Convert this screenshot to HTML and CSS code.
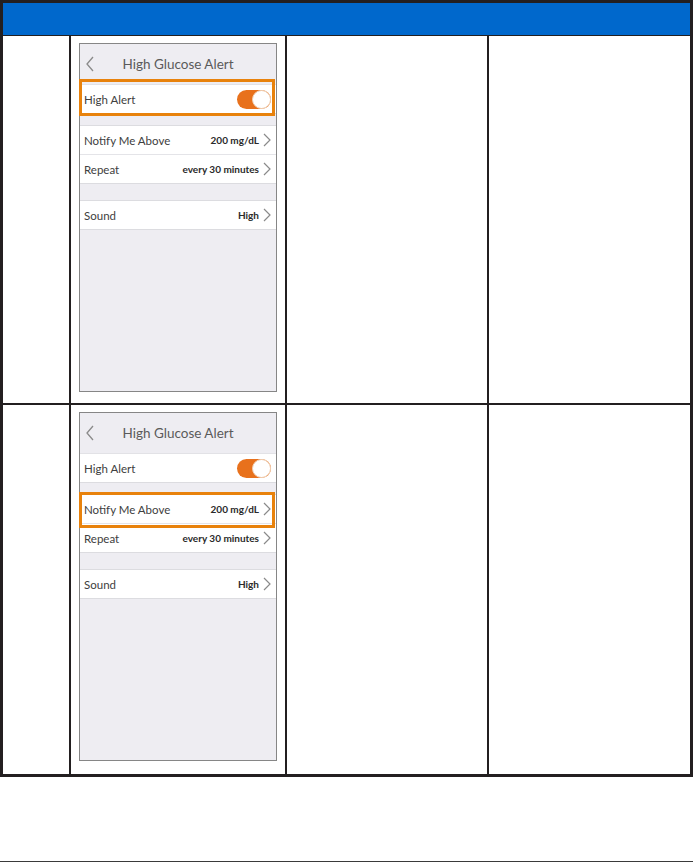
FILE: index.html
```html
<!DOCTYPE html>
<html lang="en">

<head>
  <meta charset="UTF-8" />
  <meta name="viewport" content="width=device-width, initial-scale=1.0" />
  <title>High Glucose Alert</title>
  <link rel="stylesheet" href="styles.css">
</head>

<body>
  <div class="page">
    <div class="steps-table">
      <div class="table-head"></div>

      <!-- Step 1 -->
      <div class="step-row first">
        <div class="cell"></div>
        <div class="cell shot-cell">
          <div class="phone">
            <div class="phone-title">
              <svg class="back" width="10" height="16" viewBox="0 0 10 16"><path d="M8 1 L2 8 L8 15" fill="none" stroke="#8a8a8a" stroke-width="1.3"/></svg>
              High Glucose Alert
            </div>
            <div class="group">
              <div class="item">
                <span class="label">High Alert</span>
                <span class="toggle"><span class="knob"></span></span>
              </div>
            </div>
            <div class="group gap-sm">
              <div class="item">
                <span class="label">Notify Me Above</span>
                <span class="value">200 mg/dL</span>
                <svg class="chev" width="8" height="14" viewBox="0 0 8 14"><path d="M1 1 L7 7 L1 13" fill="none" stroke="#8a8a8a" stroke-width="1.2"/></svg>
              </div>
              <div class="item">
                <span class="label">Repeat</span>
                <span class="value">every 30 minutes</span>
                <svg class="chev" width="8" height="14" viewBox="0 0 8 14"><path d="M1 1 L7 7 L1 13" fill="none" stroke="#8a8a8a" stroke-width="1.2"/></svg>
              </div>
            </div>
            <div class="group gap-lg">
              <div class="item">
                <span class="label">Sound</span>
                <span class="value">High</span>
                <svg class="chev" width="8" height="14" viewBox="0 0 8 14"><path d="M1 1 L7 7 L1 13" fill="none" stroke="#8a8a8a" stroke-width="1.2"/></svg>
              </div>
            </div>
            <div class="highlight hl-alert"></div>
          </div>
        </div>
        <div class="cell"></div>
        <div class="cell"></div>
      </div>

      <!-- Step 2 -->
      <div class="step-row second">
        <div class="cell"></div>
        <div class="cell shot-cell">
          <div class="phone">
            <div class="phone-title">
              <svg class="back" width="10" height="16" viewBox="0 0 10 16"><path d="M8 1 L2 8 L8 15" fill="none" stroke="#8a8a8a" stroke-width="1.3"/></svg>
              High Glucose Alert
            </div>
            <div class="group">
              <div class="item">
                <span class="label">High Alert</span>
                <span class="toggle"><span class="knob"></span></span>
              </div>
            </div>
            <div class="group gap-sm">
              <div class="item">
                <span class="label">Notify Me Above</span>
                <span class="value">200 mg/dL</span>
                <svg class="chev" width="8" height="14" viewBox="0 0 8 14"><path d="M1 1 L7 7 L1 13" fill="none" stroke="#8a8a8a" stroke-width="1.2"/></svg>
              </div>
              <div class="item">
                <span class="label">Repeat</span>
                <span class="value">every 30 minutes</span>
                <svg class="chev" width="8" height="14" viewBox="0 0 8 14"><path d="M1 1 L7 7 L1 13" fill="none" stroke="#8a8a8a" stroke-width="1.2"/></svg>
              </div>
            </div>
            <div class="group gap-lg">
              <div class="item">
                <span class="label">Sound</span>
                <span class="value">High</span>
                <svg class="chev" width="8" height="14" viewBox="0 0 8 14"><path d="M1 1 L7 7 L1 13" fill="none" stroke="#8a8a8a" stroke-width="1.2"/></svg>
              </div>
            </div>
            <div class="highlight hl-notify"></div>
          </div>
        </div>
        <div class="cell"></div>
        <div class="cell"></div>
      </div>
    </div>

    <div class="footer-line"></div>
  </div>
</body>

</html>
```

FILE: styles.css
```css
/* Page */
body {
  margin: 0;
  background: #fff;
  font-family: 'Lato', 'Open Sans', sans-serif;
}

.page {
  width: 693px;
}

/* Table */
.steps-table {
  border: 3px solid #231f20;
  background: #231f20;
  display: flex;
  flex-direction: column;
  gap: 2px;
}

.table-head {
  height: 32px;
  background: #0068cc;
  margin-bottom: -1px;
}

.step-row {
  display: grid;
  grid-template-columns: 66px 214px 200px 1fr;
  gap: 2px;
}

.step-row.first {
  height: 367px;
}

.step-row.second {
  height: 369px;
}

.cell {
  background: #fff;
}

.shot-cell {
  padding: 7px 8px 0;
}

/* Phone screen */
.phone {
  position: relative;
  height: 347px;
  background: #eeedf2;
  border: 1px solid #868686;
  color: #3b3b3b;
}

.phone-title {
  height: 40px;
  display: flex;
  align-items: center;
  justify-content: center;
  position: relative;
  font-size: 13.5px;
  color: #5a5a5a;
  border-bottom: 1px solid #e2e2e6;
}

.back {
  position: absolute;
  left: 5px;
  top: 12px;
}

.group {
  background: #fff;
  border-bottom: 1px solid #dcdce0;
}

.gap-sm {
  margin-top: 11px;
  border-top: 1px solid #dcdce0;
}

.gap-lg {
  margin-top: 16px;
  border-top: 1px solid #dcdce0;
}

.item {
  height: 28px;
  display: flex;
  align-items: center;
  padding: 0 5px 0 4px;
  font-size: 11.5px;
}

.item + .item {
  border-top: 1px solid #e4e4e8;
}

.label {
  flex: 1;
  color: #404040;
}

.value {
  font-size: 10px;
  font-weight: 700;
  color: #2a2a2a;
  margin-right: 4px;
}

.chev {
  display: block;
}

/* Toggle */
.toggle {
  width: 34px;
  height: 19px;
  border-radius: 10px;
  background: #e8711c;
  position: relative;
}

.knob {
  position: absolute;
  right: 0;
  top: 0;
  width: 19px;
  height: 19px;
  border-radius: 50%;
  background: #fff;
  box-sizing: border-box;
  border: 1px solid #f0d2b8;
}

/* Orange highlight boxes */
.highlight {
  position: absolute;
  left: -1px;
  right: 1px;
  border: 3px solid #e8820c;
}

.hl-alert {
  top: 35px;
  height: 31px;
}

.hl-notify {
  top: 79px;
  height: 30px;
}

/* Footer */
.footer-line {
  margin-top: 84px;
  height: 1px;
  background: #3a3a3a;
}
```
